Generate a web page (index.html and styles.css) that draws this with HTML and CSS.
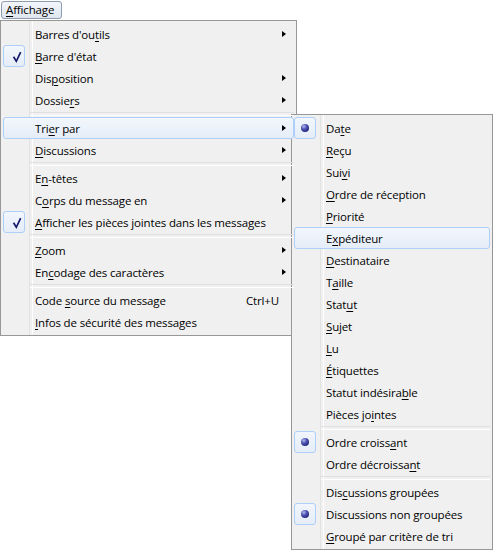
FILE: index.html
```html
<!DOCTYPE html>
<html lang="fr">
<head>
<meta charset="utf-8">
<title>Affichage</title>
<link rel="stylesheet" href="styles.css">
</head>
<body>
<div class="menubar">
  <span class="menubtn"><u>A</u>ffichage</span>
</div>

<div class="menu main">
  <div class="item has-sub"><span class="ico"></span><span class="label">Barres d'ou<u>t</u>ils</span><span class="arrow"></span></div>
  <div class="item checked"><span class="ico"><svg width="22" height="22" viewBox="0 0 22 22"><path d="M11 12.5 L13.3 16.3 L17.3 8" fill="none" stroke="#151a6e" stroke-width="1.7" stroke-linecap="square" stroke-linejoin="miter"/></svg></span><span class="label"><u>B</u>arre d'état</span></div>
  <div class="item has-sub"><span class="ico"></span><span class="label">Dis<u>p</u>osition</span><span class="arrow"></span></div>
  <div class="item has-sub"><span class="ico"></span><span class="label">Dossie<u>r</u>s</span><span class="arrow"></span></div>
  <div class="sep"></div>
  <div class="item has-sub hl"><span class="ico"></span><span class="label">Tri<u>e</u>r par</span><span class="arrow"></span></div>
  <div class="item has-sub"><span class="ico"></span><span class="label"><u>D</u>iscussions</span><span class="arrow"></span></div>
  <div class="sep"></div>
  <div class="item has-sub"><span class="ico"></span><span class="label">E<u>n</u>-têtes</span><span class="arrow"></span></div>
  <div class="item has-sub"><span class="ico"></span><span class="label">C<u>o</u>rps du message en</span><span class="arrow"></span></div>
  <div class="item checked"><span class="ico"><svg width="22" height="22" viewBox="0 0 22 22"><path d="M11 12.5 L13.3 16.3 L17.3 8" fill="none" stroke="#151a6e" stroke-width="1.7" stroke-linecap="square" stroke-linejoin="miter"/></svg></span><span class="label"><u>A</u>fficher les pièces jointes dans les messages</span></div>
  <div class="sep"></div>
  <div class="item has-sub"><span class="ico"></span><span class="label"><u>Z</u>oom</span><span class="arrow"></span></div>
  <div class="item has-sub"><span class="ico"></span><span class="label">En<u>c</u>odage des caractères</span><span class="arrow"></span></div>
  <div class="sep"></div>
  <div class="item"><span class="ico"></span><span class="label">Code <u>s</u>ource du message</span><span class="shortcut">Ctrl+U</span></div>
  <div class="item"><span class="ico"></span><span class="label"><u>I</u>nfos de sécurité des messages</span></div>
</div>

<div class="menu sub">
  <div class="item radio"><span class="ico"><span class="bullet"></span></span><span class="label">Da<u>t</u>e</span></div>
  <div class="item"><span class="ico"></span><span class="label"><u>R</u>eçu</span></div>
  <div class="item"><span class="ico"></span><span class="label">Sui<u>v</u>i</span></div>
  <div class="item"><span class="ico"></span><span class="label"><u>O</u>rdre de réception</span></div>
  <div class="item"><span class="ico"></span><span class="label"><u>P</u>riorité</span></div>
  <div class="item hl"><span class="ico"></span><span class="label">E<u>x</u>péditeur</span></div>
  <div class="item"><span class="ico"></span><span class="label"><u>D</u>estinataire</span></div>
  <div class="item"><span class="ico"></span><span class="label">T<u>a</u>ille</span></div>
  <div class="item"><span class="ico"></span><span class="label">Stat<u>u</u>t</span></div>
  <div class="item"><span class="ico"></span><span class="label"><u>S</u>ujet</span></div>
  <div class="item"><span class="ico"></span><span class="label"><u>L</u>u</span></div>
  <div class="item"><span class="ico"></span><span class="label"><u>É</u>tiquettes</span></div>
  <div class="item"><span class="ico"></span><span class="label">Statut indésira<u>b</u>le</span></div>
  <div class="item"><span class="ico"></span><span class="label">Pièces jo<u>i</u>ntes</span></div>
  <div class="sep"></div>
  <div class="item radio"><span class="ico"><span class="bullet"></span></span><span class="label">Ordre croiss<u>a</u>nt</span></div>
  <div class="item"><span class="ico"></span><span class="label">Ordre décroissa<u>n</u>t</span></div>
  <div class="sep"></div>
  <div class="item"><span class="ico"></span><span class="label">Dis<u>c</u>ussions groupées</span></div>
  <div class="item radio"><span class="ico"><span class="bullet"></span></span><span class="label">Discussions non <u>g</u>roupées</span></div>
  <div class="item"><span class="ico"></span><span class="label"><u>G</u>roupé par critère de tri</span></div>
</div>
</body>
</html>
```

FILE: styles.css
```css
* { box-sizing: border-box; }

html, body {
  margin: 0;
  padding: 0;
  background: #ffffff;
}

body {
  position: relative;
  width: 493px;
  height: 550px;
  overflow: hidden;
  font-family: "Open Sans", "Noto Sans", "Liberation Sans", sans-serif;
  font-size: 11.5px;
  letter-spacing: -0.15px;
  color: #000;
}

u {
  text-decoration: underline;
  text-underline-offset: 2px;
  text-decoration-thickness: 1px;
}

.menubar {
  height: 20px;
  padding: 1px 0 0 1px;
  display: flex;
  align-items: flex-start;
}

.menubtn {
  display: inline-flex;
  align-items: center;
  width: 61px;
  height: 18px;
  padding: 0 0 0 4px;
  border: 1px solid #8d9bb0;
  border-radius: 3px;
  background: linear-gradient(#f3f6fa, #dfe6ef);
  line-height: 16px;
}

.menu {
  position: absolute;
  background: #f0f0f0;
  border: 1px solid #979797;
  padding: 2px;
  display: flex;
  flex-direction: column;
}

.menu::before {
  content: "";
  position: absolute;
  top: 0;
  bottom: 0;
  left: 28px;
  width: 2px;
  border-left: 1px solid #e2e3e3;
  border-right: 1px solid #ffffff;
}

.main {
  left: 0;
  top: 20px;
  width: 297px;
  height: 316px;
}

.sub {
  left: 291px;
  top: 114px;
  width: 202px;
  height: 436px;
}

.item {
  position: relative;
  z-index: 1;
  display: flex;
  align-items: center;
  height: 22px;
  border: 1px solid transparent;
  border-radius: 3px;
  white-space: nowrap;
}

.item.hl {
  border-color: #aecff7;
  background: linear-gradient(#f2f6fc, #e5edf8);
}

.ico {
  flex: none;
  width: 22px;
  height: 22px;
  margin: -1px 0 -1px -1px;
  position: relative;
}

.checked .ico,
.radio .ico {
  border: 1px solid #aecff7;
  border-radius: 3px;
  background: linear-gradient(#f2f6fc, #e5edf8);
}

.checked .ico svg {
  position: absolute;
  left: -1px;
  top: -1px;
}

.bullet {
  position: absolute;
  left: 6px;
  top: 6px;
  width: 8px;
  height: 8px;
  border-radius: 50%;
  background: radial-gradient(circle at 35% 30%, #b7bcf0 0%, #5358b8 35%, #23277a 75%, #1a1d5e 100%);
}

.label {
  margin-left: 10px;
  flex: 1;
}

.shortcut {
  margin-right: 14px;
}

.arrow {
  flex: none;
  width: 0;
  height: 0;
  border-top: 3.5px solid transparent;
  border-bottom: 3.5px solid transparent;
  border-left: 4px solid #000;
  margin-right: 7px;
}

.sep {
  position: relative;
  z-index: 1;
  height: 6px;
  margin-left: 27px;
  display: flex;
  flex-direction: column;
  justify-content: center;
}

.sep::before {
  content: "";
  display: block;
  height: 2px;
  border-top: 1px solid #e0e0e0;
  border-bottom: 1px solid #ffffff;
}
```
